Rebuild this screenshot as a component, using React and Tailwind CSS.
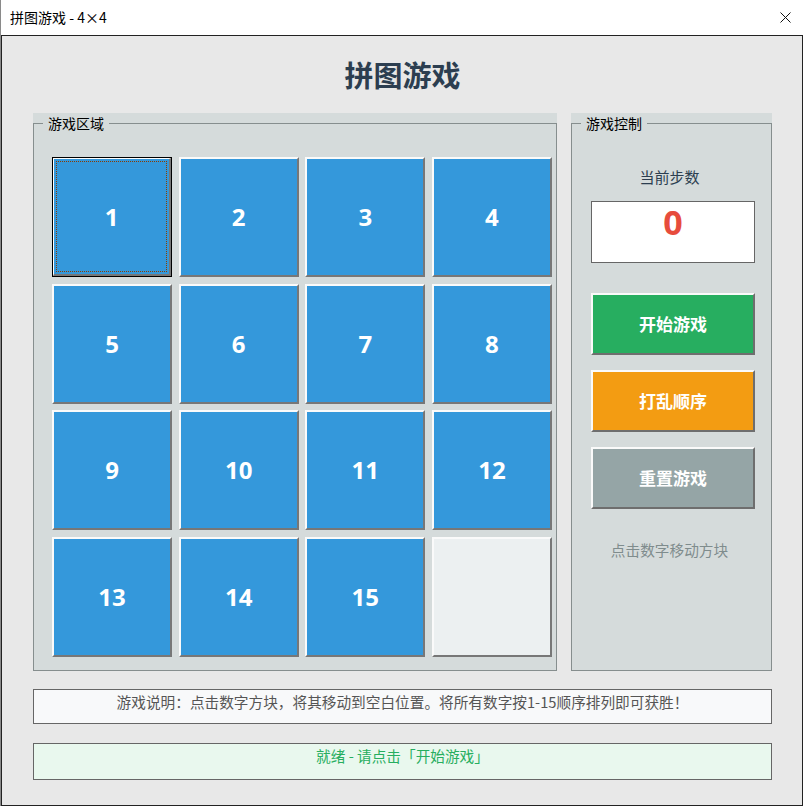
import React from "react";

const CJK = { fontFamily: '"Noto Sans CJK SC", "Microsoft YaHei", sans-serif' };
const NUM = { fontFamily: '"Open Sans", "Noto Sans CJK SC", sans-serif' };

function Tile({ n, focused }) {
  if (n === 0) {
    return (
      <div className="w-[120px] h-[120px] bg-[#ecf0f1] border-2 border-t-[#fafafa] border-l-[#fafafa] border-b-[#777777] border-r-[#777777]" />
    );
  }
  if (focused) {
    return (
      <div className="w-[120px] h-[120px] border border-black">
        <div className="w-full h-full bg-[#3498db] border-t border-l border-t-white border-l-white border-b-2 border-r-2 border-b-[#777777] border-r-[#777777] p-[2px]">
          <div className="w-full h-full border border-dotted border-[#8a3c00] flex items-center justify-center">
            <span className="text-white font-bold text-[24px] leading-none" style={NUM}>{n}</span>
          </div>
        </div>
      </div>
    );
  }
  return (
    <div className="w-[120px] h-[120px] bg-[#3498db] border-2 border-t-[#fafafa] border-l-[#fafafa] border-b-[#777777] border-r-[#777777] flex items-center justify-center">
      <span className="text-white font-bold text-[24px] leading-none" style={NUM}>{n}</span>
    </div>
  );
}

function Group({ title, className, children }) {
  return (
    <div className={"bg-[#d5dbdb] h-[558px] " + className}>
      <fieldset className="h-full border border-[#868e8e] m-0 p-0">
        <legend className="ml-[9px] px-[5px] text-[14px] leading-[20px] text-black" style={CJK}>{title}</legend>
        {children}
      </fieldset>
    </div>
  );
}

function CtrlButton({ label, bg }) {
  return (
    <div className={"w-[164px] h-[62px] ml-[19px] border-2 border-t-[#fafafa] border-l-[#fafafa] border-b-[#6e6e6e] border-r-[#6e6e6e] flex items-center justify-center " + bg}>
      <span className="text-white font-bold text-[17px]" style={CJK}>{label}</span>
    </div>
  );
}

export default function App() {
  const tiles = [1, 2, 3, 4, 5, 6, 7, 8, 9, 10, 11, 12, 13, 14, 15, 0];
  return (
    <div className="w-[804px] h-[806px] flex flex-col bg-white border-l border-[#8a8a8a]" style={CJK}>
      <div className="h-[35px] flex items-center justify-between pl-[9px] pr-[13px] shrink-0">
        <span className="text-[14px] text-black">拼图游戏 - 4×4</span>
        <svg width="11" height="11" viewBox="0 0 11 11" className="block">
          <path d="M0.5 0.5 L10.5 10.5 M10.5 0.5 L0.5 10.5" stroke="#111" strokeWidth="1" fill="none" />
        </svg>
      </div>
      <div className="flex-1 border border-[#222] mr-[1px] bg-[#e8e8e8] flex flex-col pl-[31px] pr-[30px]">
        <div className="h-[77px] flex items-center justify-center shrink-0">
          <h1 className="text-[29px] font-bold text-[#2c3e50] leading-none">拼图游戏</h1>
        </div>
        <div className="flex gap-[14px]">
          <Group title="游戏区域" className="w-[524px]">
            <div className="pl-[18px] pt-[24px]">
              <div className="grid grid-cols-[repeat(4,120px)] gap-[6.67px]">
                {tiles.map((n, i) => (
                  <Tile key={i} n={n} focused={n === 1} />
                ))}
              </div>
            </div>
          </Group>
          <Group title="游戏控制" className="w-[201px]">
            <div className="flex flex-col">
              <div className="mt-[34px] text-center text-[15px] leading-[20px] text-[#2c3e50] pr-[4px]">当前步数</div>
              <div className="mt-[14px] ml-[19px] w-[164px] h-[62px] bg-white border border-[#666] flex justify-center">
                <span className="text-[34px] font-bold text-[#e74c3c] leading-[41px]" style={NUM}>0</span>
              </div>
              <div className="mt-[30px]">
                <CtrlButton label="开始游戏" bg="bg-[#27ae60]" />
              </div>
              <div className="mt-[15px]">
                <CtrlButton label="打乱顺序" bg="bg-[#f39c12]" />
              </div>
              <div className="mt-[15px]">
                <CtrlButton label="重置游戏" bg="bg-[#95a5a6]" />
              </div>
              <div className="mt-[31px] text-center text-[14.67px] leading-[20px] text-[#7f8c8d] pr-[4px]">点击数字移动方块</div>
            </div>
          </Group>
        </div>
        <div className="mt-[18px] h-[35px] bg-[#f8f9fa] border border-[#666] text-center text-[14.67px] leading-[20px] pt-[2px] text-[#555]">
          游戏说明：点击数字方块，将其移动到空白位置。将所有数字按1-15顺序排列即可获胜！
        </div>
        <div className="mt-[19px] h-[37px] bg-[#e9f8ee] border border-[#666] text-center text-[14.67px] leading-[20px] pt-[2px] text-[#27ae60]">
          就绪 - 请点击「开始游戏」
        </div>
      </div>
    </div>
  );
}
